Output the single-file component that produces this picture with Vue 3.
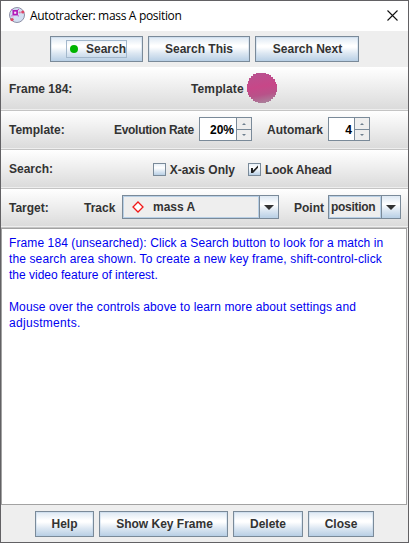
<script setup>
import { ref } from 'vue'

const xAxisOnly = ref(false)
const lookAhead = ref(true)
const message = [
  { text: 'Frame 184 (unsearched): Click a Search button to look for a match in', cls: 'l1' },
  { text: 'the search area shown. To create a new key frame, shift-control-click', cls: 'l2' },
  { text: 'the video feature of interest.', cls: 'l3' },
  { text: '', cls: '' },
  { text: 'Mouse over the controls above to learn more about settings and', cls: 'l4' },
  { text: 'adjustments.', cls: 'l5' },
]
</script>

<template>
  <div class="window">
    <header class="titlebar">
      <svg class="app-icon" width="16" height="16" viewBox="0 0 16 16">
        <circle cx="8" cy="8" r="7.5" fill="#d3dff2" stroke="#8d90a6" stroke-width="1" />
        <path d="M3 12.5L6 6l7-1" fill="none" stroke="#e3bfe0" stroke-width="1" />
        <rect x="4.3" y="3.8" width="3.8" height="3.8" fill="#f8e4f8" stroke="#b01ab8" stroke-width="1.7" />
        <path d="M2.3 2.6h1.2M8.8 2.6H10M2.3 8.9h1.2M8.8 8.9H10" stroke="#c443c4" />
        <circle cx="13.8" cy="5" r="1.6" fill="#dc4668" />
        <circle cx="10.8" cy="5.6" r="1" fill="#d979ae" />
        <circle cx="3" cy="12.6" r="1.7" fill="#d84a66" />
      </svg>
      <span class="title">Autotracker: mass A position</span>
      <svg class="close" width="11" height="11" viewBox="0 0 11 11">
        <path d="M.5 .5l10 10M10.5 .5l-10 10" stroke="#111" stroke-width="1.1" />
      </svg>
    </header>

    <div class="toolbar">
      <button class="btn search"><span class="focus"><i class="dot"></i>Search</span></button>
      <button class="btn search-this">Search This</button>
      <button class="btn search-next">Search Next</button>
    </div>

    <section class="row frame-row">
      <span class="heading">Frame 184:</span>
      <span class="template-label">Template</span>
      <svg class="template-img" width="30" height="30" viewBox="0 0 30 30" shape-rendering="crispEdges">
        <defs>
          <linearGradient id="ball" x1=".4" y1="0" x2=".6" y2="1">
            <stop offset="0" stop-color="#b9518f" />
            <stop offset=".45" stop-color="#c74788" />
            <stop offset=".72" stop-color="#b85289" />
            <stop offset="1" stop-color="#aa819b" />
          </linearGradient>
        </defs>
        <path fill="url(#ball)" d="M11 0h8v1h3v1h2v2h2v2h2v3h1v2h1v8h-1v3h-1v2h-2v2h-2v2h-2v1h-3v1h-8v-1h-3v-1h-2v-2h-2v-2h-2v-2h-1v-3h-1v-8h1v-3h1v-3h2v-2h2v-2h3v-1h2z" />
      </svg>
    </section>

    <section class="row template-row">
      <span class="heading">Template:</span>
      <span class="evo-label">Evolution Rate</span>
      <div class="spinner evo">
        <span class="value">20%</span>
        <div class="arrows"><b><i class="up"></i></b><b><i class="down"></i></b></div>
      </div>
      <span class="auto-label">Automark</span>
      <div class="spinner auto">
        <span class="value">4</span>
        <div class="arrows"><b><i class="up"></i></b><b><i class="down"></i></b></div>
      </div>
    </section>

    <section class="row search-row">
      <span class="heading">Search:</span>
      <label class="check x-axis" @click="xAxisOnly = !xAxisOnly">
        <span class="box"><svg v-if="xAxisOnly" width="9" height="9" viewBox="0 0 9 9"><path d="M1 3h2v3l5-5v2L3 8H1z" fill="#222" /></svg></span>X-axis Only
      </label>
      <label class="check look" @click="lookAhead = !lookAhead">
        <span class="box"><svg v-if="lookAhead" width="9" height="9" viewBox="0 0 9 9"><path d="M1 3h2v2.4L8 .6v2.2L3 8H1z" fill="#222" /></svg></span>Look Ahead
      </label>
    </section>

    <section class="row target-row">
      <span class="heading">Target:</span>
      <span class="track-label">Track</span>
      <div class="combo track">
        <span class="combo-value">
          <svg width="12" height="12" viewBox="0 0 12 12"><path d="M6 1L11 6L6 11L1 6z" fill="#fff" stroke="#f01818" stroke-width="1.3" /></svg>
          mass A
        </span>
        <span class="drop"><i></i></span>
      </div>
      <span class="point-label">Point</span>
      <div class="combo point">
        <span class="combo-value">position</span>
        <span class="drop"><i></i></span>
      </div>
    </section>

    <main class="text">
      <p v-for="(line, i) in message" :key="i"><span :class="line.cls">{{ line.text }}</span></p>
    </main>

    <footer class="footer">
      <button class="btn help">Help</button>
      <button class="btn show">Show Key Frame</button>
      <button class="btn delete">Delete</button>
      <button class="btn close-btn">Close</button>
    </footer>
  </div>
</template>

<style>
body { margin: 0; overflow: hidden; }
</style>

<style scoped>
* { box-sizing: border-box; }
.window {
  width: 409px; height: 543px; display: flex; flex-direction: column;
  border: 1px solid #626164; background: #eee; color: #333;
  font: bold 12px/14px "Liberation Sans", Arial, sans-serif; white-space: nowrap;
}
.titlebar { height: 30px; flex: none; display: flex; align-items: center; background: #fff; padding: 0 10px 0 8px; }
.app-icon { margin-top: -2px; }
.title { margin-left: 5px; font: 12px/16px "Open Sans", "Noto Sans", sans-serif; color: #000; letter-spacing: -.32px; }
.close { margin-left: auto; margin-top: -1px; margin-right: 4px; }
.titlebar { padding-right: 6px; }
.toolbar { height: 36px; flex: none; display: flex; gap: 5px; padding: 5px 0 0 49px; }
.btn {
  height: 26px; padding: 0; border: 1px solid #7a8a99; color: #333; font: inherit;
  box-shadow: inset 0 0 0 1px #b8cfe566;
  background: linear-gradient(#dde8f3 0%, #fff 35%, #fff 42%, #dce7f2 68%, #b8cfe5 100%);
}
.search { width: 93px; }
.search-this { width: 102px; }
.search-next { width: 104px; padding-left: 1px; }
.focus { display: flex; align-items: center; width: 61px; height: 18px; margin-left: 15px; padding-left: 3px; border: 1px solid #a3b8cc; }
.dot { width: 8px; height: 8px; margin-right: 8px; border-radius: 50%; background: #00b400; }
.row {
  flex: none; display: flex; align-items: center; padding-left: 8px;
  background: linear-gradient(#fff, #dadada); border-bottom: 1px solid #c4c4c4; box-shadow: inset 0 -1px #eee;
}
.frame-row { height: 44px; }
.template-row, .search-row { height: 39px; }
.target-row { height: 39px; }
.template-label { margin-left: 120px; width: 53px; letter-spacing: .12px; }
.template-img { margin-left: 3px; margin-top: -1px; }
.heading { width: 62px; }
.evo-label { margin-left: 43px; width: 81px; letter-spacing: -.3px; }
.spinner { height: 24px; display: flex; background: #fff; border: 1px solid #7a8a99; color: #000; margin-bottom: 2px; }
.spinner.evo { margin-left: 4px; width: 53px; }
.spinner.auto { margin-left: 5px; width: 42px; }
.auto-label { margin-left: 15px; width: 56px; }
.value { flex: 1; text-align: right; padding: 5px 2px 0 0; }
.arrows { width: 15px; border-left: 1px solid #7a8a99; display: flex; flex-direction: column; background: #eee; }
.arrows b { height: 11px; display: flex; align-items: center; justify-content: center; }
.arrows b + b { border-top: 1px solid #7a8a99; }
.arrows i { border: 2px solid transparent; }
.up { border-top: 0 !important; border-bottom-color: #6e7f8e !important; }
.down { border-bottom: 0 !important; border-top-color: #6e7f8e !important; }
.check { display: flex; align-items: center; padding-top: 1px; }
.box {
  width: 13px; height: 13px; margin-right: 4px; border: 1px solid #7a8a99; display: flex; align-items: center; justify-content: center;
  background: linear-gradient(#e8f0f7, #fff 35%, #b8cfe5);
}
.x-axis { margin-left: 82px; width: 82px; }
.look { margin-left: 13px; letter-spacing: -.15px; }
.combo { height: 24px; display: flex; border: 1px solid #7a8a99; background: #eee; margin-bottom: 2px; }
.combo-value { flex: 1; display: flex; align-items: center; box-shadow: inset 0 0 0 1px #b8cfe5; padding-bottom: 0; }
.track-label { margin-left: 13px; width: 33px; }
.track { width: 157px; margin-left: 5px; }
.track svg { margin: 0 9px 0 9px; }
.point-label { margin-left: 15px; width: 29px; }
.point { width: 73px; margin-left: 5px; }
.point .combo-value { padding-left: 2px; letter-spacing: -.3px; }
.drop { width: 19px; border-left: 1px solid #7a8a99; display: flex; align-items: center; justify-content: center; background: linear-gradient(#dde8f3 0%, #fff 38%, #dce7f2 66%, #b8cfe5); }
.drop i { border: 5px solid transparent; border-top-color: #333; border-bottom: 0; }
.text {
  flex: none; height: 277px; margin-right: 1px; padding: 6px 7px 0; background: #fff; border: 1px solid #a2a2a2;
  color: #0000f0; font-weight: normal; line-height: 16px;
}
.text p { margin: 0; height: 16px; }
.l1 { letter-spacing: .1px; }
.l2 { letter-spacing: .12px; }
.l4 { letter-spacing: .12px; }
.l5 { letter-spacing: .3px; }
.footer { flex: 1; display: flex; align-items: flex-start; gap: 5px; padding: 6px 0 0 34px; }
.help { width: 59px; }
.show { width: 129px; padding-left: 2px; }
.delete { width: 70px; }
.close-btn { width: 66px; }
</style>
